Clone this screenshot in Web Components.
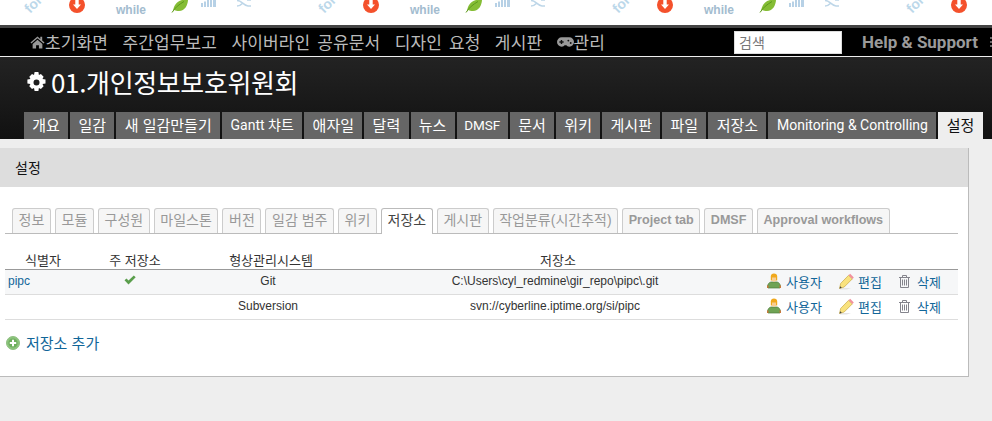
<!DOCTYPE html>
<html lang="ko">
<head>
<meta charset="utf-8">
<title>설정</title>
<style>
  html, body { margin: 0; padding: 0; background: #eee; }
  body { font-family: "Liberation Sans", "Noto Sans CJK KR", sans-serif; font-size: 12px; color: #333; height: 421px; overflow: hidden; }
</style>
</head>
<body>
<pattern-banner></pattern-banner>
<top-menu>
  <menu-link icon="home">초기화면</menu-link>
  <menu-link>주간업무보고</menu-link>
  <menu-link>사이버라인 공유문서</menu-link>
  <menu-link>디자인 요청</menu-link>
  <menu-link>게시판</menu-link>
  <menu-link icon="gamepad">관리</menu-link>
</top-menu>
<project-header name="01.개인정보보호위원회">
  <main-tab>개요</main-tab>
  <main-tab>일감</main-tab>
  <main-tab>새 일감만들기</main-tab>
  <main-tab latin>Gantt 챠트</main-tab>
  <main-tab>애자일</main-tab>
  <main-tab>달력</main-tab>
  <main-tab>뉴스</main-tab>
  <main-tab latin style="padding:0 7.500px;font-size:13.500px">DMSF</main-tab>
  <main-tab>문서</main-tab>
  <main-tab>위키</main-tab>
  <main-tab>게시판</main-tab>
  <main-tab>파일</main-tab>
  <main-tab>저장소</main-tab>
  <main-tab latin>Monitoring &amp; Controlling</main-tab>
  <main-tab selected>설정</main-tab>
</project-header>
<content-panel heading="설정">
  <settings-tabs>
    <settings-tab>정보</settings-tab>
    <settings-tab>모듈</settings-tab>
    <settings-tab>구성원</settings-tab>
    <settings-tab>마일스톤</settings-tab>
    <settings-tab>버전</settings-tab>
    <settings-tab>일감 범주</settings-tab>
    <settings-tab>위키</settings-tab>
    <settings-tab selected>저장소</settings-tab>
    <settings-tab>게시판</settings-tab>
    <settings-tab>작업분류(시간추적)</settings-tab>
    <settings-tab latin>Project tab</settings-tab>
    <settings-tab latin>DMSF</settings-tab>
    <settings-tab latin>Approval workflows</settings-tab>
  </settings-tabs>
  <repo-table></repo-table>
  <add-link>저장소 추가</add-link>
</content-panel>

<script>
const ICONS = {
  home: '<svg width="15" height="14" viewBox="0 0 16 14"><path fill="#999" d="M8 1 0.5 7.6l1 1L8 3l6.5 5.6 1-1L13 5.400V1.500h-2v2.200zM2.800 9v5h3.700v-3.500h3V14h3.700V9L8 4.600z"/></svg>',
  gamepad: '<svg width="17" height="12" viewBox="0 0 18 12"><path fill="#999" d="M5 1h8a5 5 0 0 1 0 10c-1.600 0-2.500-.8-3-1.500H8C7.500 10.200 6.600 11 5 11A5 5 0 0 1 5 1z"/><path fill="#111" d="M4 4h1.500v1.300H7v1.400H5.500V8H4V6.700H2.500V5.300H4z"/><circle cx="12" cy="4.500" r="1" fill="#111"/><circle cx="14.500" cy="7" r="1" fill="#111"/></svg>',
  gear: '<svg width="21" height="21" viewBox="0 0 21 21"><path fill="#fff" fill-rule="evenodd" d="M8.600 0h3.800l.5 3 2-.9 2.700 2.700-1.100 2.200 3 .6v3.800l-3 .6 1.100 2.200-2.700 2.700-2-1-.5 3.100H8.600l-.6-3.100-2 1-2.700-2.700 1.100-2.200-3-.6V7.600l3-.6-1.100-2.200L6 2.100l2 .9zM10.500 7.500a3 3 0 1 0 0 6 3 3 0 0 0 0-6z"/></svg>',
  check: '<svg width="12" height="10" viewBox="0 0 12 10"><path fill="#5a9e4c" d="M0.500 5.200 2.500 3.400 4.500 5.500 9.800 0.500 11.700 2.300 4.500 9.500z"/></svg>',
  user: '<svg width="16" height="16" viewBox="0 0 16 16"><path fill="#6fa354" stroke="#4f7d3d" stroke-width=".7" d="M1.500 14c0-3 1.800-4.800 3.500-5h6c1.700.2 3.500 2 3.500 5l-.5 1H2z"/><path fill="#c9773a" d="M1 12.500h1.500V15H1zM13.500 12.500H15V15h-1.500z"/><path fill="#f0a81c" d="M4.800 3.400C4.800 1.500 6 .500 8 .500s3.200 1 3.200 2.900v4.100H4.800z"/><path fill="#f7cd94" d="M6 4.500h4v3.300L8 9 6 7.800z"/></svg>',
  pencil: '<svg width="16" height="17" viewBox="0 0 16 17"><path fill="#e4e4e4" d="M2 15h11l-4 1.500H2z"/><path fill="#f9e27e" stroke="#c9a945" stroke-width=".7" d="M2.700 10.400 10.600 2.300 14.300 5.900 6.200 14 1.500 15.500z"/><path fill="#f2919c" d="M10.600 2.300 12.200.8 15.800 4.400 14.300 5.900z"/><path fill="#444" d="M1.500 15.500 2.200 13.200 3.800 14.800z"/></svg>',
  trash: '<svg width="11" height="13" viewBox="0 0 11 13"><path fill="none" stroke="#84848c" stroke-width="1" d="M0 2.500h11M3.500 2.500V.5h4v2M1.500 3v9.500h8V3M3.500 4.500v6M5.500 4.500v6M7.500 4.500v6"/></svg>',
  add: '<svg width="14" height="14" viewBox="0 0 14 14"><circle cx="7" cy="7" r="6.500" fill="#8cc47c" stroke="#8fbf80"/><circle cx="7" cy="7" r="4.600" fill="#6fae5e"/><path fill="#fff" d="M6 3.800h2V6h2.200v2H8v2.200H6V8H3.800V6H6z"/></svg>'
};

class BaseEl extends HTMLElement {
  constructor(html) {
    super();
    this.attachShadow({ mode: 'open' });
    this.shadowRoot.innerHTML = html;
  }
}

class PatternBanner extends BaseEl {
  constructor() {
    const tile = `<svg width="294" height="25" viewBox="0 0 294 25">
      <text x="0" y="0" transform="translate(30 14) rotate(-45)" font-family="Liberation Sans" font-weight="700" font-size="14" fill="#bcd8ea">for</text>
      <circle cx="77" cy="5" r="8" fill="#f4512c"/>
      <path fill="#fff" d="M75.300 0h3.400v4.500h2.300L77 9 73 4.500h2.300z"/>
      <text x="116" y="13.500" font-family="Liberation Sans" font-weight="700" font-size="12" fill="#a3bccf">while</text>
      <path fill="#85bd35" d="M173 11.500c.5-5 3-10 9-11.500h6c-.3 5-3 11-9 11-2 0-3.500-.3-4.500-1z"/>
      <path fill="none" stroke="#5d9a1c" d="M172 12.500c3-5 7-8 12-11"/>
      <path fill="#b7d1e6" d="M201 3h2v4h-2zM204 1.500h2V7h-2zM207 0h2v7h-2zM210 0h2v7h-2zM213 0h3v7h-3z"/>
      <path fill="none" stroke="#bdd6e8" stroke-width="1.600" d="M237 .5c5 0 6 5 11 5.500h3M237 6c3 0 4.500-1.500 6-3M247 0h4"/>
    </svg>`;
    super(`<style>
      :host { display: flex; height: 25px; background: #fff; overflow: hidden; }
      svg { flex: none; display: block; }
    </style>${tile}${tile}${tile}${tile}`);
  }
}

class TopMenu extends BaseEl {
  constructor() {
    super(`<style>
      :host { display: flex; align-items: center; height: 28px; margin-bottom: 1px; background: #000; border-top: 3px solid #444; padding-left: 30px; color: #bbb; }
      nav { display: flex; gap: 14.400px; flex: none; width: 704px; }
      input { box-sizing: border-box; width: 108px; height: 23px; margin: 0; padding: 0 4px; border: 1px solid #ddd; background: #fff; font: 14px "Noto Sans CJK KR", sans-serif; }
      input::placeholder { color: #777; }
      .help { margin-left: 20px; font: 700 17px Roboto, "Liberation Sans", sans-serif; color: #9a9a9a; white-space: nowrap; }
      .more { flex: none; width: 2px; height: 10px; margin-left: 12px; background: repeating-linear-gradient(#666 0 2px, #000 2px 4px); }
    </style><nav><slot></slot></nav><input placeholder="검색"><span class="help">Help &amp; Support</span><span class="more"></span>`);
  }
}

class MenuLink extends BaseEl {
  constructor() {
    super(`<style>
      :host { display: flex; align-items: center; font: 17px/28px "Noto Sans CJK KR", sans-serif; letter-spacing: .13px; word-spacing: 2px; white-space: nowrap; }
      svg { display: block; }
    </style><span id="i" style="display:contents"></span><slot></slot>`);
  }
  connectedCallback() {
    const name = this.getAttribute('icon');
    if (name) this.shadowRoot.getElementById('i').innerHTML = ICONS[name];
  }
}

class ProjectHeader extends BaseEl {
  constructor() {
    super(`<style>
      :host { display: block; box-sizing: border-box; height: 82px; padding: 12px 0 0 24px; background: linear-gradient(#232323, #111); }
      h1 { display: flex; align-items: center; gap: 4px; height: 26px; margin: 0 0 17px 2px; font: 400 26px/26px "Noto Sans CJK KR", sans-serif; letter-spacing: -.35px; color: #fff; }
      h1 svg { display: block; }
      .tabs { display: flex; gap: 2px; }
    </style><h1><span id="g" style="display:contents"></span><span id="n"></span></h1><div class="tabs"><slot></slot></div>`);
  }
  connectedCallback() {
    this.shadowRoot.getElementById('g').innerHTML = ICONS.gear;
    this.shadowRoot.getElementById('n').textContent = this.getAttribute('name');
  }
}

class MainTab extends BaseEl {
  constructor() {
    super(`<style>
      :host { display: block; height: 27px; padding: 0 8.300px; background: #666; color: #fff; font: 15px/26px "Noto Sans CJK KR", sans-serif; white-space: nowrap; }
      :host([latin]) { padding: 0 8.500px; font: 14px/27px Roboto, "Noto Sans CJK KR", sans-serif; }
      :host([selected]) { background: #eee; color: #111; }
    </style><slot></slot>`);
  }
}

class ContentPanel extends BaseEl {
  constructor() {
    super(`<style>
      :host { display: block; box-sizing: border-box; width: 969px; height: 229px; margin-top: 9px; background: #fff; border-right: 1px solid #bbb; border-bottom: 1px solid #bbb; }
      h2 { margin: 0; height: 39px; padding-left: 15px; background: #ddd; font: 400 14px/39px "Noto Sans CJK KR", sans-serif; color: #111; }
      .body { padding: 21px 10px 0 5px; }
    </style><h2 id="h"></h2><div class="body"><slot></slot></div>`);
  }
  connectedCallback() {
    this.shadowRoot.getElementById('h').textContent = this.getAttribute('heading');
  }
}

class SettingsTabs extends BaseEl {
  constructor() {
    super(`<style>
      :host { display: flex; gap: 4px; height: 25px; padding-left: 7px; border-bottom: 1px solid #bbb; }
    </style><slot></slot>`);
  }
}

class SettingsTab extends BaseEl {
  constructor() {
    super(`<style>
      :host { display: block; box-sizing: border-box; height: 25px; padding: 0 5.600px; background: #f6f6f6; border: 1px solid #ccc; border-bottom: 0; border-radius: 3px 3px 0 0; color: #999; font: 14px/23px "Liberation Sans", "Noto Sans CJK KR", sans-serif; white-space: nowrap; }
      :host([latin]) { font-size: 12.600px; font-weight: 700; padding: 0 5.500px; }
      :host([selected]) { height: 26px; background: #fff; border-color: #bbb; color: #444; }
    </style><slot></slot>`);
  }
}

class RepoTable extends BaseEl {
  constructor() {
    const actions = `<td class="actions"><span class="a"><i data-i="user"></i>사용자</span><span class="a"><i data-i="pencil"></i>편집</span><span class="a"><i data-i="trash"></i>삭제</span></td>`;
    super(`<style>
      :host { display: block; margin-top: 16px; }
      table { width: 953px; table-layout: fixed; border-collapse: collapse; font: 12px "Liberation Sans", "Noto Sans CJK KR", sans-serif; color: #333; }
      th { height: 19px; padding: 0; font-weight: 400; font-size: 13px; border-bottom: 1px solid #999; }
      td { height: 25px; padding: 0 0 2px; box-sizing: border-box; text-align: center; border-bottom: 1px solid #ddd; }
      tbody tr:first-child { background: #f6f7f8; }
      td:first-child { text-align: left; padding-left: 3px; color: #169; }
      td:nth-child(2) { padding-right: 10px; }
      td:nth-child(3), td:nth-child(4) { padding-right: 6px; }
      .actions { text-align: left; color: #169; white-space: nowrap; font-size: 13px; }
      .a { display: inline-flex; align-items: center; gap: 4px; height: 17px; vertical-align: middle; }
      .a:nth-child(1) { width: 72px; margin-left: 3px; }
      .a:nth-child(2) { width: 61px; }
      .a:nth-child(3) { gap: 7px; }
      .a i { display: flex; }
    </style><table>
      <colgroup><col style="width:76px"><col style="width:108px"><col style="width:164px"><col style="width:410px"><col></colgroup>
      <thead><tr><th>식별자</th><th>주 저장소</th><th>형상관리시스템</th><th>저장소</th><th></th></tr></thead>
      <tbody>
        <tr><td>pipc</td><td><i data-i="check"></i></td><td>Git</td><td>C:\\Users\\cyl_redmine\\gir_repo\\pipc\\.git</td>${actions}</tr>
        <tr><td></td><td></td><td>Subversion</td><td>svn://cyberline.iptime.org/si/pipc</td>${actions}</tr>
      </tbody></table>`);
    this.shadowRoot.querySelectorAll('[data-i]').forEach((el) => { el.innerHTML = ICONS[el.dataset.i]; });
  }
}

class AddLink extends BaseEl {
  constructor() {
    super(`<style>
      :host { display: flex; align-items: center; gap: 6px; margin: 13px 0 0 1px; color: #169; font: 15px/20px "Noto Sans CJK KR", sans-serif; }
      svg { display: block; }
    </style>${ICONS.add}<span><slot></slot></span>`);
  }
}

customElements.define('pattern-banner', PatternBanner);
customElements.define('top-menu', TopMenu);
customElements.define('menu-link', MenuLink);
customElements.define('project-header', ProjectHeader);
customElements.define('main-tab', MainTab);
customElements.define('content-panel', ContentPanel);
customElements.define('settings-tabs', SettingsTabs);
customElements.define('settings-tab', SettingsTab);
customElements.define('repo-table', RepoTable);
customElements.define('add-link', AddLink);
</script>
</body>
</html>
